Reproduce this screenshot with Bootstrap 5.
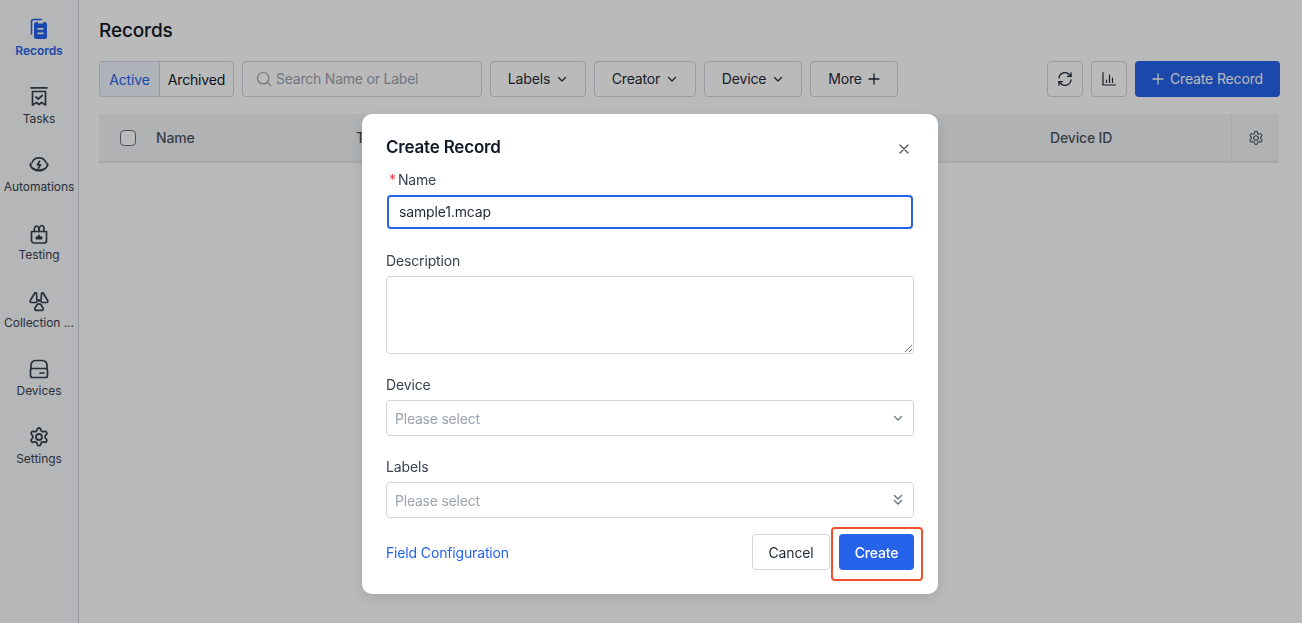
<!DOCTYPE html>
<html lang="en">
<head>
    <meta charset="UTF-8">
    <title>Records</title>
    <link href="https://cdn.jsdelivr.net/npm/bootstrap@5.3.0/dist/css/bootstrap.min.css" rel="stylesheet">
    <style>
        html, body { height: 100%; }
        body { font-family: Inter, "Liberation Sans", sans-serif; font-size: 14px; letter-spacing: -.15px; color: #111827; background: #fff; overflow: hidden; }
        svg { display: block; flex: none; }
        button, input, textarea { letter-spacing: inherit; }

        .app-shell { height: 623px; }
        .side-rail { width: 79px; flex: none; background: #f9fafb; border-right: 1px solid #d1d5db; padding-top: 1px; }
        .rail-item { height: 68px; display: flex; flex-direction: column; align-items: center; padding-top: 16px; font-size: 12px; line-height: 16px; letter-spacing: -.05px; color: #374151; white-space: nowrap; }
        .rail-item svg { width: 24px; height: 24px; margin-bottom: 2px; }
        .rail-item.is-on { color: #2563eb; font-weight: 600; }

        .main-area { padding: 0 22px 0 20px; min-width: 0; }
        .page-title { font-size: 19px; font-weight: 500; line-height: 28px; margin: 17px 0 16px; color: #111827; }
        .tool-row { height: 36px; margin-bottom: 17px; }
        .seg-group { display: flex; height: 36px; border: 1px solid #d1d5db; border-radius: 4px; overflow: hidden; }
        .seg-group span { display: flex; align-items: center; justify-content: center; }
        .seg-on { width: 60px; background: #eff6ff; color: #2563eb; border-right: 1px solid #d1d5db; }
        .seg-off { width: 73px; color: #111827; }
        .search-box { width: 240px; height: 36px; border: 1px solid #d1d5db; border-radius: 4px; padding: 0 0 1px 13px; color: #9ca3af; gap: 4px; letter-spacing: -.22px; }
        .tool-btn { height: 36px; padding: 0 0 1px; font-size: 14px; color: #1f2937; background: #fff; border: 1px solid #d1d5db; border-radius: 4px; gap: 6px; }
        .w-labels { width: 96px; } .w-creator { width: 102px; } .w-device { width: 98px; } .w-more { width: 88px; }
        .w-icon { width: 36px; }
        .tool-main { width: 145px; height: 36px; background: #2563eb; border: 0; color: #fff; border-radius: 4px; font-size: 14px; gap: 6px; padding: 0 0 1px 0; }

        .head-row { height: 49px; background: #f3f4f6; border-bottom: 2px solid #e5e7eb; font-weight: 500; color: #4b5563; width: 1180px; }
        .tick-box { width: 16px; height: 16px; border: 1px solid #6b7280; border-radius: 4px; background: #fff; margin-left: 21px; margin-right: 20px; }
        .cell-name { width: 200px; } .cell-t { width: 694px; }
        .cell-device { width: 181px; }
        .cell-gear { width: 48px; height: 100%; border-left: 1px solid #e5e7eb; }

        .dim-layer { position: fixed; inset: 0; background: rgba(0, 0, 0, .27); z-index: 10; }
        .dialog-box { position: fixed; left: 362px; top: 114px; width: 576px; height: 480px; background: #fff; border-radius: 10px; box-shadow: 0 4px 16px rgba(0, 0, 0, .12); padding: 20px 24px; z-index: 20; }
        .dialog-title { font-size: 17px; font-weight: 600; line-height: 24px; margin: 0; color: #111827; letter-spacing: -.2px; }
        .dialog-head { height: 25px; }
        .field-label { font-size: 14px; line-height: 20px; color: #374151; display: block; margin-bottom: 5px; }
        .req-mark { color: #ef4444; margin: 0 2px 0 3px; }
        .field-name { margin-top: 11px; margin-bottom: 22px; }
        .field-gap { margin-bottom: 21px; }
        .dialog-box .form-control { border-radius: 4px; font-size: 14px; border-color: #d1d5db; box-shadow: none; color: #1f2937; }
        .name-input.form-control { width: 526px; height: 34px; margin-left: 1px; padding: 0 10px 2px; border: 2px solid #2563eb; }
        .note-input.form-control { height: 78px; width: 528px; }
        .pick-box { width: 528px; height: 36px; border: 1px solid #d1d5db; border-radius: 4px; padding: 0 9px 0 8px; color: #9ca3af; letter-spacing: -.22px; }
        .dialog-foot { height: 36px; margin-top: 16px; }
        .field-link { color: #2563eb; text-decoration: none; }
        .foot-cancel { width: 78px; height: 36px; background: #fff; color: #1f2937; border: 1px solid #d1d5db; border-radius: 4px; font-size: 14px; padding: 0; margin-right: 9px; }
        .foot-create { width: 75px; height: 36px; background: #2563eb; color: #fff; border: 0; border-radius: 4px; font-size: 14px; font-weight: 500; padding: 0; }
        .mark-box { position: absolute; left: 469px; top: 413px; width: 92px; height: 54px; border: 2px solid #f0502e; border-radius: 4px; pointer-events: none; }
    </style>
</head>
<body>
    <svg width="0" height="0" class="position-absolute">
        <symbol id="gear" viewBox="0 0 24 24">
            <path fill="none" stroke="currentColor" stroke-linejoin="round" d="M12.22 3h-.44a1.5 1.5 0 0 0-1.4 1l-.4 1.3a1.5 1.5 0 0 1-.7.9l-.6.35a1.5 1.5 0 0 1-1.1.15L6.3 6.4a1.5 1.5 0 0 0-1.7.7l-.3.5a1.5 1.5 0 0 0 .2 1.75l.9 1a1.5 1.5 0 0 1 .4 1v.9a1.5 1.5 0 0 1-.4 1l-.9 1a1.5 1.5 0 0 0-.2 1.75l.3.5a1.5 1.5 0 0 0 1.7.7l1.28-.3a1.5 1.5 0 0 1 1.1.15l.6.35a1.5 1.5 0 0 1 .7.9l.4 1.3a1.5 1.5 0 0 0 1.4 1h.44a1.5 1.5 0 0 0 1.4-1l.4-1.3a1.5 1.5 0 0 1 .7-.9l.6-.35a1.5 1.5 0 0 1 1.1-.15l1.28.3a1.5 1.5 0 0 0 1.7-.7l.3-.5a1.5 1.5 0 0 0-.2-1.75l-.9-1a1.5 1.5 0 0 1-.4-1v-.9a1.5 1.5 0 0 1 .4-1l.9-1a1.5 1.5 0 0 0 .2-1.75l-.3-.5a1.5 1.5 0 0 0-1.7-.7l-1.28.3a1.5 1.5 0 0 1-1.1-.15l-.6-.35a1.5 1.5 0 0 1-.7-.9l-.4-1.3a1.5 1.5 0 0 0-1.4-1z"/>
            <circle cx="12" cy="12" r="3" fill="none" stroke="currentColor"/>
        </symbol>
        <symbol id="chev" viewBox="0 0 12 12">
            <path d="M2.500 4.500L6 8l3.500-3.500" fill="none" stroke="currentColor" stroke-width="1.200" stroke-linecap="round" stroke-linejoin="round"/>
        </symbol>
        <symbol id="plus" viewBox="0 0 12 12">
            <path d="M6 1v10M1 6h10" fill="none" stroke="currentColor" stroke-width="1.300" stroke-linecap="round"/>
        </symbol>
    </svg>

    <div class="app-shell d-flex">
        <nav class="side-rail">
            <div class="rail-item is-on">
                <svg viewBox="0 0 24 24"><path d="M4.500 17V4.500a2 2 0 0 1 2-2h8" fill="none" stroke="currentColor" stroke-width="1.500" stroke-linecap="round"/><path fill="currentColor" fill-rule="evenodd" d="M9.500 5h1.500v1.500h5V5h1.500A2.500 2.500 0 0 1 20 7.500v12a2.500 2.500 0 0 1-2.500 2.500h-8A2.500 2.500 0 0 1 7 19.500v-12A2.500 2.500 0 0 1 9.500 5zm1 6v1.800h6V11zm0 4.500v1.800h6v-1.800z"/></svg>
                Records
            </div>
            <div class="rail-item">
                <svg viewBox="0 0 24 24" fill="none" stroke="currentColor" stroke-width="1.700" stroke-linecap="round" stroke-linejoin="round"><path d="M4 2.800h16"/><path d="M5.500 6.500h13V20l-4-2.500-2.500 2-2.500-2-4 2.500z"/><path d="M9 12l2.200 2 4-3.500"/></svg>
                Tasks
            </div>
            <div class="rail-item">
                <svg viewBox="0 0 24 24" fill="none" stroke="currentColor" stroke-width="1.700" stroke-linecap="round" stroke-linejoin="round"><path d="M5 9.500a7.600 7.600 0 0 1 14 0"/><path d="M5.500 15a7.500 5.500 0 0 0 13 0"/><path d="M3.500 11.500c0 3.500 3.500 5.500 8.500 5.500s8.500-2 8.500-5.500"/><path d="M3.500 10.500v2M20.500 10.500v2"/><path d="M12.600 8.200l-2.100 3.600h3l-2.100 3.400"/></svg>
                Automations
            </div>
            <div class="rail-item">
                <svg viewBox="0 0 24 24" fill="none" stroke="currentColor" stroke-width="1.700" stroke-linecap="round" stroke-linejoin="round"><path d="M4.500 10.500h15v9a2.500 2.500 0 0 1-2.500 2.500H7a2.500 2.500 0 0 1-2.500-2.500z"/><path d="M7.500 10.500c-.5-3 .3-5.500 2-5.500 1.500 0 2.500 2.500 2.500 5.500"/><path d="M12 10.500c0-3.500 1-6 3-6s2.500 3 1.500 6"/><path fill="currentColor" stroke-width="1" d="M12 14l1.700 2h1.300v2H9v-2h1.300z"/></svg>
                Testing
            </div>
            <div class="rail-item">
                <svg viewBox="0 0 24 24" fill="none" stroke="currentColor" stroke-width="1.700" stroke-linecap="round" stroke-linejoin="round"><path d="M7.500 4.500L3.300 11.500a1.300 1.300 0 0 0 1.100 2H8.500a1.500 1.500 0 0 0 1.500-1.800L9.500 5a1 1 0 0 0-2-.5z"/><path d="M16.500 4.500l4.200 7a1.300 1.300 0 0 1-1.100 2H15.500a1.500 1.500 0 0 1-1.500-1.800L14.500 5a1 1 0 0 1 2-.5z"/><path d="M10 15.800a3 3 0 0 1 4 0l2 3.200c.6 1-.1 2.300-1.300 2.300H9.300c-1.200 0-1.900-1.300-1.300-2.300z"/><circle cx="12" cy="11.500" r=".6" fill="currentColor"/></svg>
                Collection ...
            </div>
            <div class="rail-item">
                <svg viewBox="0 0 24 24" fill="none" stroke="currentColor" stroke-width="1.700" stroke-linecap="round" stroke-linejoin="round"><path d="M4 12V8a4.500 4.500 0 0 1 4.500-4.500h7A4.500 4.500 0 0 1 20 8v4"/><rect x="3.500" y="11.500" width="17" height="9" rx="2"/><path d="M13 16h4"/></svg>
                Devices
            </div>
            <div class="rail-item">
                <svg viewBox="0 0 24 24" stroke-width="1.800"><use href="#gear"/></svg>
                Settings
            </div>
        </nav>

        <main class="main-area flex-grow-1">
            <h1 class="page-title">Records</h1>
            <div class="tool-row d-flex align-items-center gap-2">
                <div class="seg-group">
                    <span class="seg-on">Active</span>
                    <span class="seg-off">Archived</span>
                </div>
                <div class="search-box d-flex align-items-center">
                    <svg width="16" height="16" viewBox="0 0 16 16" fill="none" stroke="#9ca3af" stroke-width="1.200" stroke-linecap="round"><circle cx="7.200" cy="7.200" r="5.700"/><path d="M11.500 11.500l3 3"/></svg>
                    <span>Search Name or Label</span>
                </div>
                <button class="tool-btn w-labels d-flex align-items-center justify-content-center">Labels <svg width="12" height="12"><use href="#chev"/></svg></button>
                <button class="tool-btn w-creator d-flex align-items-center justify-content-center">Creator <svg width="12" height="12"><use href="#chev"/></svg></button>
                <button class="tool-btn w-device d-flex align-items-center justify-content-center">Device <svg width="12" height="12"><use href="#chev"/></svg></button>
                <button class="tool-btn w-more d-flex align-items-center justify-content-center">More <svg width="12" height="12"><use href="#plus"/></svg></button>
                <button class="tool-btn w-icon d-flex align-items-center justify-content-center ms-auto" aria-label="Refresh">
                    <svg width="16" height="16" viewBox="0 0 16 16" fill="none" stroke="currentColor" stroke-width="1.300" stroke-linecap="round" stroke-linejoin="round"><path d="M2 7a6 6 0 0 1 10.500-3.300L14 5.200"/><path d="M14 1.800v3.600h-3.600"/><path d="M14 9a6 6 0 0 1-10.500 3.300L2 10.800"/><path d="M2 14.200v-3.600h3.600"/></svg>
                </button>
                <button class="tool-btn w-icon d-flex align-items-center justify-content-center" aria-label="Stats">
                    <svg width="16" height="16" viewBox="0 0 16 16" fill="none" stroke="currentColor" stroke-width="1.200" stroke-linecap="round"><path d="M2 1.500v12.500h12.500"/><path d="M5.500 9v2.500M8.500 4v7.500M11.500 7v4.500"/></svg>
                </button>
                <button class="tool-main d-flex align-items-center justify-content-center"><svg width="12" height="12"><use href="#plus"/></svg> Create Record</button>
            </div>
            <div class="head-row d-flex align-items-center">
                <span class="tick-box"></span>
                <span class="cell-name">Name</span>
                <span class="cell-t">Title</span>
                <span class="cell-device">Device ID</span>
                <span class="cell-gear d-flex align-items-center justify-content-center"><svg width="18" height="18" stroke-width="1.500"><use href="#gear"/></svg></span>
            </div>
        </main>
    </div>

    <div class="dim-layer"></div>

    <div class="dialog-box">
        <div class="dialog-head d-flex align-items-center justify-content-between">
            <h2 class="dialog-title">Create Record</h2>
            <svg class="me-1 mt-1" width="12" height="12" viewBox="0 0 12 12" fill="none" stroke="#4b5563" stroke-width="1.300" stroke-linecap="round" aria-label="Close"><path d="M2 2l8 8M10 2l-8 8"/></svg>
        </div>
        <div class="field-name">
            <label class="field-label"><span class="req-mark">*</span>Name</label>
            <input class="form-control name-input" value="sample1.mcap">
        </div>
        <div class="field-gap">
            <label class="field-label">Description</label>
            <textarea class="form-control note-input"></textarea>
        </div>
        <div class="field-gap">
            <label class="field-label">Device</label>
            <div class="pick-box d-flex align-items-center justify-content-between">
                <span>Please select</span>
                <svg width="12" height="12" class="text-secondary"><use href="#chev"/></svg>
            </div>
        </div>
        <div>
            <label class="field-label">Labels</label>
            <div class="pick-box d-flex align-items-center justify-content-between">
                <span>Please select</span>
                <svg width="12" height="12" viewBox="0 0 12 12" fill="none" stroke="#6b7280" stroke-width="1.400" stroke-linecap="round" stroke-linejoin="round"><path d="M2.500 1.500L6 5l3.500-3.500M2.500 6.500L6 10l3.500-3.500"/></svg>
            </div>
        </div>
        <div class="dialog-foot d-flex align-items-center">
            <a class="field-link me-auto" href="#">Field Configuration</a>
            <button class="foot-cancel">Cancel</button>
            <button class="foot-create">Create</button>
        </div>
        <div class="mark-box"></div>
    </div>

    <script src="https://cdn.jsdelivr.net/npm/bootstrap@5.3.0/dist/js/bootstrap.bundle.min.js"></script>
</body>
</html>
